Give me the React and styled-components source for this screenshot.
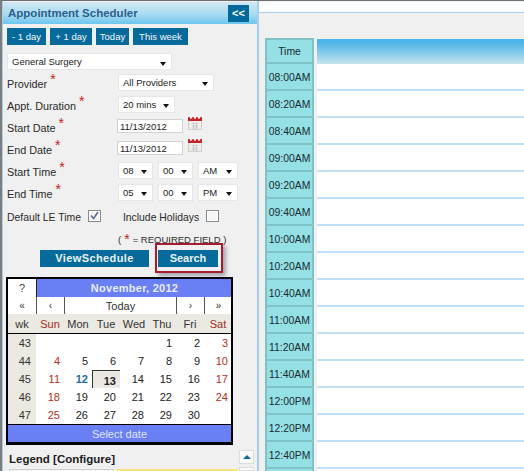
import React from "react";
import styled, { createGlobalStyle } from "styled-components";

const Global = createGlobalStyle`
  html, body { margin: 0; padding: 0; background: #f0f0f0; }
  * { box-sizing: border-box; }
  body { font-family: "Liberation Sans", Arial, sans-serif; color: #222; }
`;

const Page = styled.div`
  width: 524px; height: 471px; overflow: hidden; display: flex;
  border-top: 1px solid #6f6f6f; border-left: 2px solid #7d7d7d;
  background: #f0f0f0;
`;
const Side = styled.aside`
  width: 257px; flex: none; height: 100%; display: flex; flex-direction: column;
  border-left: 1px solid #a9cdea; border-right: 2px solid #a9cfee; padding-top: 1px;
`;
const Header = styled.header`
  height: 22px; flex: none; display: flex; align-items: center; justify-content: space-between;
  padding: 0 8px 0 5px;
  background: linear-gradient(#d2e8f3, #a9dbf1 55%, #6cc6ee);
`;
const Title = styled.h1`
  margin: 0; font-size: 11.5px; font-weight: bold; color: #2b5f8e;
`;
const Collapse = styled.button`
  width: 21px; height: 17px; border: 0; padding: 0; background: #046a9b; color: #fff;
  font: bold 11px "Liberation Sans", Arial, sans-serif;
`;
const Body = styled.div`
  padding: 4px 0 0 4px; display: flex; flex-direction: column; flex: 1; min-height: 0;
`;
const QuickBar = styled.div`
  display: flex; gap: 4px; margin-bottom: 8px;
`;
const Quick = styled.button`
  height: 17px; border: 0; padding: 0; width: ${p => p.$w}px; background: #066a9a; color: #f2f8fb;
  font: 9.5px "Liberation Sans", Arial, sans-serif;
`;
const Drop = styled.div`
  width: ${p => p.$w}px; height: 17px; flex: none; display: flex; align-items: center;
  justify-content: space-between; padding: 0 6px 0 5px; background: #fff;
  box-shadow: 0 0 0 1px #e6e6e6 inset; font-size: 9.5px; color: #222;
  &::after {
    content: ""; margin-top: 4px; border: 3.5px solid transparent; border-top: 4px solid #111; border-bottom: 0;
  }
`;
const Row = styled.div`
  height: 22px; display: flex; align-items: center;
  margin-top: ${p => p.$top || 0}px;
`;
const Label = styled.label`
  width: 111px; flex: none; font-size: 10.8px; padding-top: 4px; color: #2a2a2a;
`;
const Star = styled.span`
  color: #c8201c; font-size: 14px; line-height: 0; vertical-align: 4px;
`;
const DateInput = styled.input`
  width: 66px; height: 14px; border: 1px solid #d2d2d2; background: #fff; padding: 0 2px;
  font: 9.5px "Liberation Sans", Arial, sans-serif; color: #222; margin-right: 5px; margin-left: -1px;
`;
const TimeGroup = styled.div`
  display: flex; gap: 5px;
`;
const CheckRow = styled(Row)`
  font-size: 10.4px; color: #2a2a2a;
`;
const CheckText = styled.span`
  margin-left: ${p => p.$left || 0}px;
`;
const Check = styled.span`
  width: 13px; height: 12px; margin-left: ${p => p.$left}px; margin-top: -3px; border: 1px solid #8a8a8a;
  background: #f4f4f4; box-shadow: 0 0 0 1px #fff inset; display: flex; align-items: center; justify-content: center;
`;
const Required = styled.div`
  height: 22px; display: flex; align-items: center; gap: 3px; padding-left: 111px; font-size: 9.5px; color: #2a2a2a; white-space: pre;
`;
const ActionBar = styled.div`
  display: flex; padding-left: 33px; gap: 9px; height: 17px;
`;
const Action = styled.button`
  height: 17px; width: ${p => p.$w}px; border: 0; padding: 0 0 1px; background: #066a9a; color: #e8f2f8;
  font: bold 11px "Liberation Sans", Arial, sans-serif; letter-spacing: ${p => p.$ls || 0}px;
`;
const Highlight = styled.div`
  position: relative; display: flex;
  &::after {
    content: ""; position: absolute; left: -3px; right: -5px; top: -7px; bottom: -6px;
    border: 2px solid #a41c30; box-shadow: 3px 3px 4px rgba(90,90,110,.5);
  }
`;
const Calendar = styled.div`
  width: 227px; margin: 10px 0 0 -1px; flex: none; background: #fff;
  border: solid #000; border-width: 2px 2px 3px 2px; font-size: 11px;
`;
const CalGrid = styled.div`
  display: grid; grid-template-columns: repeat(8, 28px); width: 223px; overflow: hidden;
`;
const Help = styled.div`
  height: 18px; display: flex; align-items: center; justify-content: center; color: #444;
`;
const Month = styled.div`
  grid-column: span 7; height: 18px; display: flex; align-items: center; justify-content: center;
  background: #6b7ff5; color: #e8ecff; font-weight: bold; border-left: 1px solid #222; letter-spacing: .25px;
`;
const Nav = styled.div`
  grid-column: span ${p => p.$span || 1}; height: 17px; display: flex; align-items: center; justify-content: center;
  border-left: ${p => p.$first ? "0" : "1px solid #555"}; color: #333;
  font-size: ${p => p.$small ? "10px" : "11px"};
`;
const DayName = styled.div`
  height: 20px; display: flex; align-items: center; justify-content: center; background: #ece9e2;
  border-bottom: 1px solid #000; color: ${p => p.$weekend ? "#a52a1a" : "#333"};
`;
const Week = styled.div`
  height: 18px; background: #ece9e2; display: flex; align-items: center; justify-content: flex-end; padding-right: 5px; color: #333;
`;
const Day = styled.div`
  height: 18px; display: flex; align-items: center; justify-content: flex-end; padding-right: 4px;
  color: ${p => p.$today ? "#1c6fa8" : p.$weekend ? "#b0301e" : "#222"};
  font-weight: ${p => (p.$today || p.$sel) ? "bold" : "normal"};
  ${p => p.$sel && "background:#ece9e2;border-top:1px solid #333;border-left:1px solid #333;padding-top:2px;"}
`;
const Foot = styled.div`
  height: 18px; background: #6b7ff5; border-top: 1px solid #000; color: #dfe4ff; display: flex; align-items: center; justify-content: center;
`;
const Legend = styled.div`
  display: flex; margin-top: 5px; flex: 1; min-height: 0; padding-right: 3px;
`;
const LegendBody = styled.div`
  flex: 1; min-width: 0; padding: 3px 0 0 2px;
`;
const LegendTitle = styled.div`
  font-size: 11.5px; font-weight: bold; color: #1c1c1c; height: 15px;
`;
const LegendRow = styled.div`
  display: flex; gap: 3px; margin-top: 1px;
`;
const LegendName = styled.div`
  width: 105px; height: 12px; border: 1px solid #cfcfcf; background: #f4f4f4;
`;
const LegendColor = styled.div`
  flex: 1; height: 12px; background: #fbe07c; margin-right: 1px;
`;
const Scroll = styled.div`
  width: 15px; flex: none; display: flex; flex-direction: column; gap: 3px;
`;
const ScrollBtn = styled.div`
  height: 14px; background: #fafafa; border: 1px solid #dcdcdc; display: flex; align-items: center; justify-content: center;
  &::before { content: ""; border: 4px solid transparent; border-bottom: 4px solid #12679a; border-top: 0; }
`;
const ScrollTrack = styled.div`
  flex: 1; background: #fafafa; border: 1px solid #dcdcdc;
`;
const Main = styled.main`
  flex: 1; min-width: 0; height: 100%; display: flex; flex-direction: column;
`;
const TopStrip = styled.div`
  height: 11px; flex: none; background: #fbfdff; border-bottom: 1px solid #a9cfee; margin-top: 1px;
`;
const Schedule = styled.div`
  display: flex; gap: 3px; margin: 25px 0 0 6px;
`;
const TimeCol = styled.div`
  width: 49px; flex: none; background: #95e0e4; border: 2px solid #7fc3c6; border-bottom: 0;
`;
const TimeCell = styled.div`
  height: ${p => p.$head ? 24 : 27}px; display: flex; align-items: center; justify-content: center;
  padding-top: 1px; font-size: 10.4px; color: #1a2a30; border-bottom: 2px solid #7fc3c6;
`;
const SlotCol = styled.div`
  flex: 1; min-width: 0; margin-top: 1px;
`;
const SlotHead = styled.div`
  height: 25px; background: linear-gradient(#4fb4e8 15%, #8ccdea 60%, #c8e5ef);
`;
const Slot = styled.div`
  height: 27px; background: #fff; border-bottom: 2px solid #bfe0f5;
`;

const CalIcon = ({ className }) => (
  <svg className={className} width="14" height="14" viewBox="0 0 14 14">
    <rect x=".5" y="2" width="13" height="11.5" fill="#efedea" stroke="#d2cfca" />
    <rect x="0" y="1" width="14" height="4" fill="#c4242a" />
    <circle cx="3" cy="1.5" r="1.2" fill="#fff" /><circle cx="7" cy="1.5" r="1.2" fill="#fff" /><circle cx="11" cy="1.5" r="1.2" fill="#fff" />
    <path d="M4 7.5h6M4 10h6M4 12h6M5.5 6.5v6M8.5 6.5v6" stroke="#c2c2cc" strokeWidth=".7" />
  </svg>
);
const DateIcon = styled(CalIcon)` margin-top: -6px; flex: none; `;

const times = ["08:00AM","08:20AM","08:40AM","09:00AM","09:20AM","09:40AM","10:00AM","10:20AM","10:40AM","11:00AM","11:20AM","11:40AM","12:00PM","12:20PM","12:40PM",""];
const weeks = [
  [43, ["", "", "", "", 1, 2, 3]],
  [44, [4, 5, 6, 7, 8, 9, 10]],
  [45, [11, 12, 13, 14, 15, 16, 17]],
  [46, [18, 19, 20, 21, 22, 23, 24]],
  [47, [25, 26, 27, 28, 29, 30, ""]],
];
const dayNames = ["Sun","Mon","Tue","Wed","Thu","Fri","Sat"];

export default function App() {
  return (
    <Page>
      <Global />
      <Side>
        <Header>
          <Title>Appointment Scheduler</Title>
          <Collapse>&lt;&lt;</Collapse>
        </Header>
        <Body>
          <QuickBar>
            <Quick $w={39}>- 1 day</Quick>
            <Quick $w={42}>+ 1 day</Quick>
            <Quick $w={33}>Today</Quick>
            <Quick $w={55}>This week</Quick>
          </QuickBar>
          <Drop $w={165}>General Surgery</Drop>
          <Row $top={1}><Label>Provider <Star>*</Star></Label><Drop $w={96}>All Providers</Drop></Row>
          <Row><Label>Appt. Duration <Star>*</Star></Label><Drop $w={57}>20 mins</Drop></Row>
          <Row><Label>Start Date <Star>*</Star></Label><DateInput defaultValue="11/13/2012" /><DateIcon /></Row>
          <Row><Label>End Date <Star>*</Star></Label><DateInput defaultValue="11/13/2012" /><DateIcon /></Row>
          <Row><Label>Start Time <Star>*</Star></Label>
            <TimeGroup><Drop $w={35}>08</Drop><Drop $w={35}>00</Drop><Drop $w={40}>AM</Drop></TimeGroup>
          </Row>
          <Row><Label>End Time <Star>*</Star></Label>
            <TimeGroup><Drop $w={35}>05</Drop><Drop $w={35}>00</Drop><Drop $w={40}>PM</Drop></TimeGroup>
          </Row>
          <CheckRow $top={3}>
            <span>Default LE Time</span>
            <Check $left={7}>
              <svg width="9" height="9" viewBox="0 0 9 9"><path d="M1 4.5l2.5 3L8 1" fill="none" stroke="#5a6a90" strokeWidth="1.6" /></svg>
            </Check>
            <CheckText $left={22}>Include Holidays</CheckText>
            <Check $left={7} />
          </CheckRow>
          <Required><span>(</span><Star>*</Star><span>= REQUIRED FIELD )</span></Required>
          <ActionBar>
            <Action $w={109} $ls={0.4}>ViewSchedule</Action>
            <Highlight><Action $w={60}>Search</Action></Highlight>
          </ActionBar>
          <Calendar>
            <CalGrid>
              <Help>?</Help>
              <Month>November, 2012</Month>
              <Nav $first $small>«</Nav>
              <Nav $small>‹</Nav>
              <Nav $span={4}>Today</Nav>
              <Nav $small>›</Nav>
              <Nav $small>»</Nav>
              <DayName>wk</DayName>
              {dayNames.map((d, i) => <DayName key={d} $weekend={i === 0 || i === 6}>{d}</DayName>)}
              {weeks.map(([w, days]) => (
                <React.Fragment key={w}>
                  <Week>{w}</Week>
                  {days.map((d, i) => (
                    <Day key={i} $weekend={i === 0 || i === 6} $today={d === 12} $sel={d === 13}>{d}</Day>
                  ))}
                </React.Fragment>
              ))}
            </CalGrid>
            <Foot>Select date</Foot>
          </Calendar>
          <Legend>
            <LegendBody>
              <LegendTitle>Legend [Configure]</LegendTitle>
              <LegendRow><LegendName /><LegendColor /></LegendRow>
            </LegendBody>
            <Scroll><ScrollBtn /><ScrollTrack /></Scroll>
          </Legend>
        </Body>
      </Side>
      <Main>
        <TopStrip />
        <Schedule>
          <TimeCol>
            <TimeCell $head>Time</TimeCell>
            {times.map((t, i) => <TimeCell key={i}>{t}</TimeCell>)}
          </TimeCol>
          <SlotCol>
            <SlotHead />
            {times.map((t, i) => <Slot key={i} />)}
          </SlotCol>
        </Schedule>
      </Main>
    </Page>
  );
}
